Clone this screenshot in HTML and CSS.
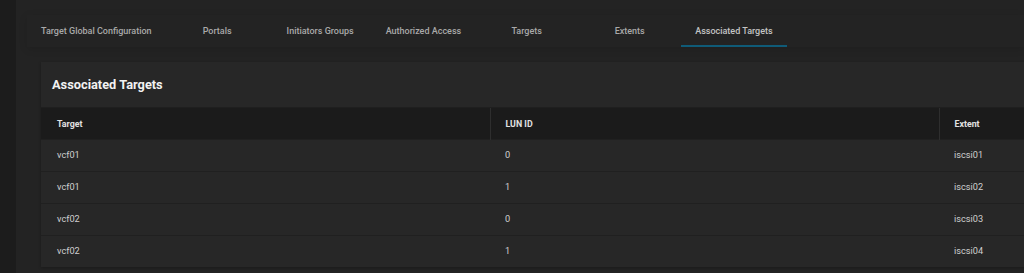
FILE: index.html
```html
<!DOCTYPE html>
<html lang="en">
<head>
  <meta charset="UTF-8">
  <title>iSCSI - Associated Targets</title>
  <link rel="stylesheet" href="styles.css">
</head>
<body>
  <div class="sidebar-edge"></div>

  <main class="page">
    <nav class="tabs">
      <a class="tab">Target Global Configuration</a>
      <a class="tab">Portals</a>
      <a class="tab">Initiators Groups</a>
      <a class="tab">Authorized Access</a>
      <a class="tab">Targets</a>
      <a class="tab">Extents</a>
      <a class="tab active">Associated Targets</a>
    </nav>

    <section class="card">
      <div class="card-title">Associated Targets</div>
      <table class="grid">
        <thead>
          <tr>
            <th>Target</th>
            <th>LUN ID</th>
            <th>Extent</th>
          </tr>
        </thead>
        <tbody>
          <tr><td>vcf01</td><td>0</td><td>iscsi01</td></tr>
          <tr><td>vcf01</td><td>1</td><td>iscsi02</td></tr>
          <tr><td>vcf02</td><td>0</td><td>iscsi03</td></tr>
          <tr><td>vcf02</td><td>1</td><td>iscsi04</td></tr>
        </tbody>
      </table>
    </section>
  </main>
</body>
</html>
```

FILE: styles.css
```css
html, body {
  height: 100%;
}

body {
  margin: 0;
  display: flex;
  background-color: #232323;
  font-family: Roboto, 'Liberation Sans', sans-serif;
  color: #cfcfcf;
  overflow: hidden;
}

.sidebar-edge {
  width: 16px;
  flex-shrink: 0;
  background-color: #1c1c1c;
}

.page {
  flex: 1;
  min-width: 0;
  padding: 15px 0 0 11px;
}

/* tab strip */
.tabs {
  display: flex;
  height: 32px;
  box-shadow: 0 2px 8px rgba(0, 0, 0, 0.12);
}

.tab {
  min-width: 103px;
  padding: 2px 14px 0;
  box-sizing: border-box;
  display: flex;
  align-items: center;
  justify-content: center;
  font-size: 9px;
  font-weight: 500;
  color: #a9a9a9;
  border-bottom: 2px solid transparent;
}

.tab.active {
  color: #c4c4c4;
  border-bottom-color: #0f5b78;
}

/* card with table */
.card {
  margin-top: 15px;
  margin-left: 14px;
  width: 1100px;
  background-color: #272727;
  box-shadow: 0 1px 3px rgba(0, 0, 0, 0.25);
}

.card-title {
  height: 45px;
  display: flex;
  align-items: center;
  padding-left: 11px;
  font-size: 12.8px;
  font-weight: 700;
  color: #f2f2f2;
  border-bottom: 1px solid #1f1f1f;
}

.grid {
  width: 100%;
  border-collapse: collapse;
  table-layout: fixed;
}

.grid th,
.grid td {
  box-sizing: border-box;
  text-align: left;
  padding: 0 0 0 15px;
  font-size: 9.2px;
}

.grid th:first-child,
.grid td:first-child {
  padding-left: 16px;
}

.grid th {
  height: 31px;
  padding-top: 2px;
  background-color: #1b1b1b;
  color: #e2e2e2;
  font-weight: 700;
  font-size: 8.8px;
  border-left: 1px solid #2e2e2e;
}

.grid th:first-child {
  width: 449px;
  border-left: none;
}

.grid th:nth-child(2) {
  width: 449px;
}

.grid td {
  height: 32px;
  padding-bottom: 2px;
  color: #d0d0d0;
  border-top: 1px solid #202020;
}
```
